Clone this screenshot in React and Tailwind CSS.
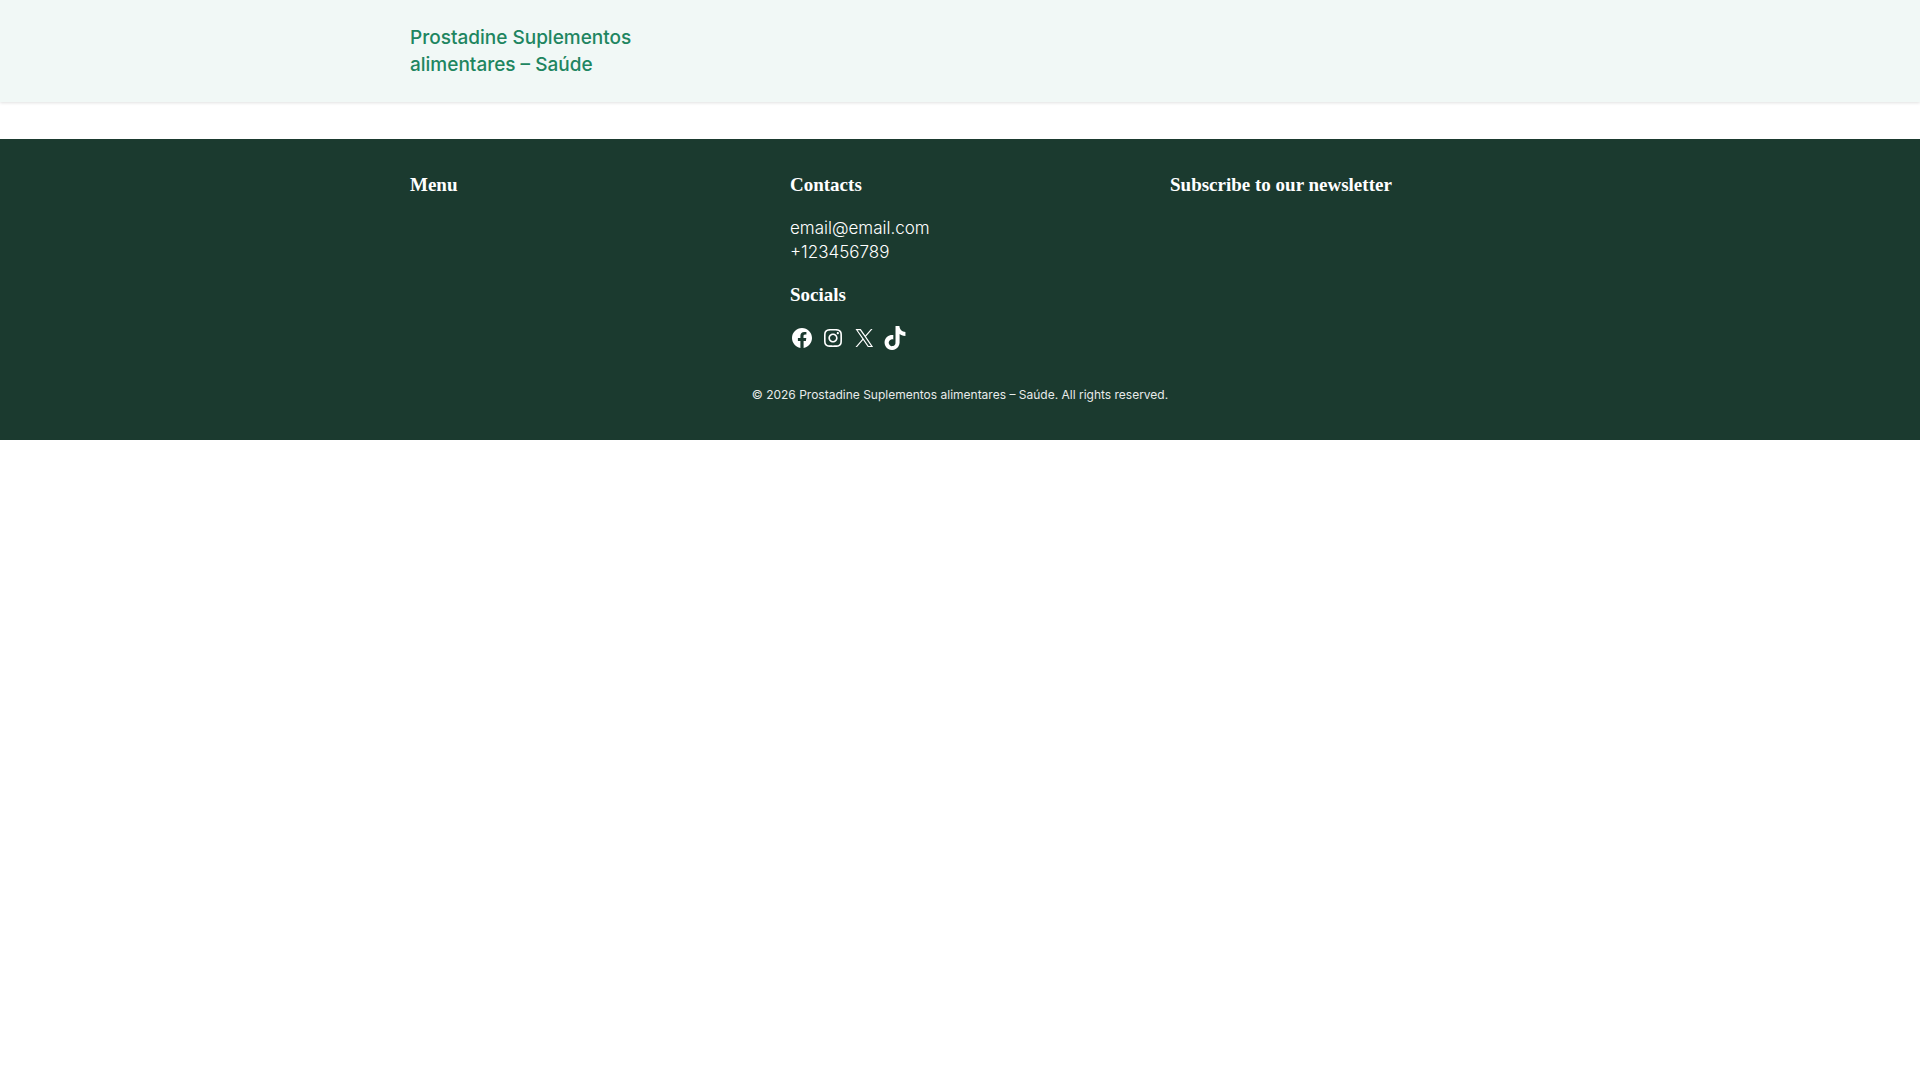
const socials = [
  {
    name: 'Facebook',
    viewBox: '0 0 24 24',
    path: 'M12 2C6.5 2 2 6.5 2 12c0 5 3.7 9.1 8.4 9.9v-7H7.9V12h2.5V9.8c0-2.5 1.5-3.9 3.8-3.9 1.1 0 2.2.2 2.2.2v2.5h-1.3c-1.2 0-1.6.8-1.6 1.6V12h2.8l-.4 2.9h-2.3v7C18.3 21.1 22 17 22 12c0-5.5-4.5-10-10-10z',
  },
  {
    name: 'Instagram',
    viewBox: '0 0 24 24',
    path: 'M12,4.622c2.403,0,2.688,0.009,3.637,0.052c0.877,0.04,1.354,0.187,1.671,0.31c0.42,0.163,0.72,0.358,1.035,0.673c0.315,0.315,0.51,0.615,0.673,1.035c0.123,0.317,0.27,0.794,0.31,1.671c0.043,0.949,0.052,1.234,0.052,3.637s-0.009,2.688-0.052,3.637c-0.04,0.877-0.187,1.354-0.31,1.671c-0.163,0.42-0.358,0.72-0.673,1.035c-0.315,0.315-0.615,0.51-1.035,0.673c-0.317,0.123-0.794,0.27-1.671,0.31c-0.949,0.043-1.233,0.052-3.637,0.052s-2.688-0.009-3.637-0.052c-0.877-0.04-1.354-0.187-1.671-0.31c-0.42-0.163-0.72-0.358-1.035-0.673c-0.315-0.315-0.51-0.615-0.673-1.035c-0.123-0.317-0.27-0.794-0.31-1.671C4.631,14.688,4.622,14.403,4.622,12s0.009-2.688,0.052-3.637c0.04-0.877,0.187-1.354,0.31-1.671c0.163-0.42,0.358-0.72,0.673-1.035c0.315-0.315,0.615-0.51,1.035-0.673c0.317-0.123,0.794-0.27,1.671-0.31C9.312,4.631,9.597,4.622,12,4.622M12,3C9.556,3,9.249,3.01,8.289,3.054C7.331,3.098,6.677,3.25,6.105,3.472C5.513,3.702,5.011,4.01,4.511,4.511c-0.5,0.5-0.808,1.002-1.038,1.594C3.25,6.677,3.098,7.331,3.054,8.289C3.01,9.249,3,9.556,3,12c0,2.444,0.01,2.751,0.054,3.711c0.044,0.958,0.196,1.612,0.418,2.185c0.23,0.592,0.538,1.094,1.038,1.594c0.5,0.5,1.002,0.808,1.594,1.038c0.572,0.222,1.227,0.375,2.185,0.418C9.249,20.99,9.556,21,12,21s2.751-0.01,3.711-0.054c0.958-0.044,1.612-0.196,2.185-0.418c0.592-0.23,1.094-0.538,1.594-1.038c0.5-0.5,0.808-1.002,1.038-1.594c0.222-0.572,0.375-1.227,0.418-2.185C20.99,14.751,21,14.444,21,12s-0.01-2.751-0.054-3.711c-0.044-0.958-0.196-1.612-0.418-2.185c-0.23-0.592-0.538-1.094-1.038-1.594c-0.5-0.5-1.002-0.808-1.594-1.038c-0.572-0.222-1.227-0.375-2.185-0.418C14.751,3.01,14.444,3,12,3L12,3zM12,7.378c-2.552,0-4.622,2.069-4.622,4.622S9.448,16.622,12,16.622s4.622-2.069,4.622-4.622S14.552,7.378,12,7.378zM12,15c-1.657,0-3-1.343-3-3s1.343-3,3-3s3,1.343,3,3S13.657,15,12,15zM16.804,6.116c-0.596,0-1.08,0.484-1.08,1.08s0.484,1.08,1.08,1.08c0.596,0,1.08-0.484,1.08-1.08S17.401,6.116,16.804,6.116z',
  },
  {
    name: 'X',
    viewBox: '0 0 24 24',
    path: 'M13.982 10.622 20.54 3h-1.554l-5.693 6.618L8.745 3H3.5l6.876 10.007L3.5 21h1.554l6.012-6.989L15.868 21h5.245l-7.131-10.378Zm-2.128 2.474-.697-.997-5.543-7.93H8l4.474 6.4.697.996 5.815 8.318h-2.387l-4.745-6.787Z',
  },
  {
    name: 'TikTok',
    viewBox: '0 0 32 32',
    path: 'M16.708 0.027c1.745-0.027 3.48-0.011 5.213-0.027 0.105 2.041 0.839 4.12 2.333 5.563 1.491 1.479 3.6 2.156 5.652 2.385v5.369c-1.923-0.063-3.855-0.463-5.6-1.291-0.76-0.344-1.468-0.787-2.161-1.24-0.009 3.896 0.016 7.787-0.025 11.667-0.104 1.864-0.719 3.719-1.803 5.255-1.744 2.557-4.771 4.224-7.88 4.276-1.907 0.109-3.812-0.411-5.437-1.369-2.693-1.588-4.588-4.495-4.864-7.615-0.032-0.667-0.043-1.333-0.016-1.984 0.24-2.537 1.495-4.964 3.443-6.615 2.208-1.923 5.301-2.839 8.197-2.297 0.027 1.975-0.052 3.948-0.052 5.923-1.323-0.428-2.869-0.308-4.025 0.495-0.844 0.547-1.485 1.385-1.819 2.333-0.276 0.676-0.197 1.427-0.181 2.145 0.317 2.188 2.421 4.027 4.667 3.828 1.489-0.016 2.916-0.88 3.692-2.145 0.251-0.443 0.532-0.896 0.547-1.417 0.131-2.385 0.079-4.76 0.095-7.145 0.011-5.375-0.016-10.735 0.025-16.093z',
  },
];

const FooterHeading = ({ children }) => (
  <h2 className="font-['Liberation_Serif',serif] text-[19px] leading-[27px] font-bold text-white">
    {children}
  </h2>
);

export default function App() {
  return (
    <div className="bg-white font-[Inter,sans-serif]">
      <header className="bg-[#f1f8f6] px-5 py-6 shadow-[0_1px_3px_rgba(0,0,0,0.12)]">
        <div className="mx-auto max-w-[1100px]">
          <a
            href="#"
            className="block max-w-[240px] text-[19px] leading-[27px] font-medium text-[#208560]"
          >
            Prostadine Suplementos alimentares – Saúde
          </a>
        </div>
      </header>

      <main className="h-[37px]" />

      <footer className="bg-[#1b3a2f] px-5 pt-8 pb-9 text-white">
        <div className="mx-auto grid max-w-[1100px] grid-cols-1 gap-10 md:grid-cols-3">
          <nav aria-label="Menu">
            <FooterHeading>Menu</FooterHeading>
          </nav>

          {/* Contacts and social links */}
          <div>
            <FooterHeading>Contacts</FooterHeading>
            <p className="mt-[18px] mb-[17px] text-[17px] leading-6 font-light">
              email@email.com
              <br />
              +123456789
            </p>
            <FooterHeading>Socials</FooterHeading>
            <ul className="mt-[18px] flex gap-[7px]">
              {socials.map((social) => (
                <li key={social.name}>
                  <a href="#" aria-label={social.name} className="block">
                    <svg viewBox={social.viewBox} className="size-6" fill="currentColor" aria-hidden="true">
                      <path d={social.path} />
                    </svg>
                  </a>
                </li>
              ))}
            </ul>
          </div>

          <div>
            <FooterHeading>Subscribe to our newsletter</FooterHeading>
          </div>
        </div>

        <p className="mt-9 text-center text-[12px] leading-[18px] text-[#e8ebea]">
          © 2026 Prostadine Suplementos alimentares – Saúde. All rights reserved.
        </p>
      </footer>
    </div>
  );
}
